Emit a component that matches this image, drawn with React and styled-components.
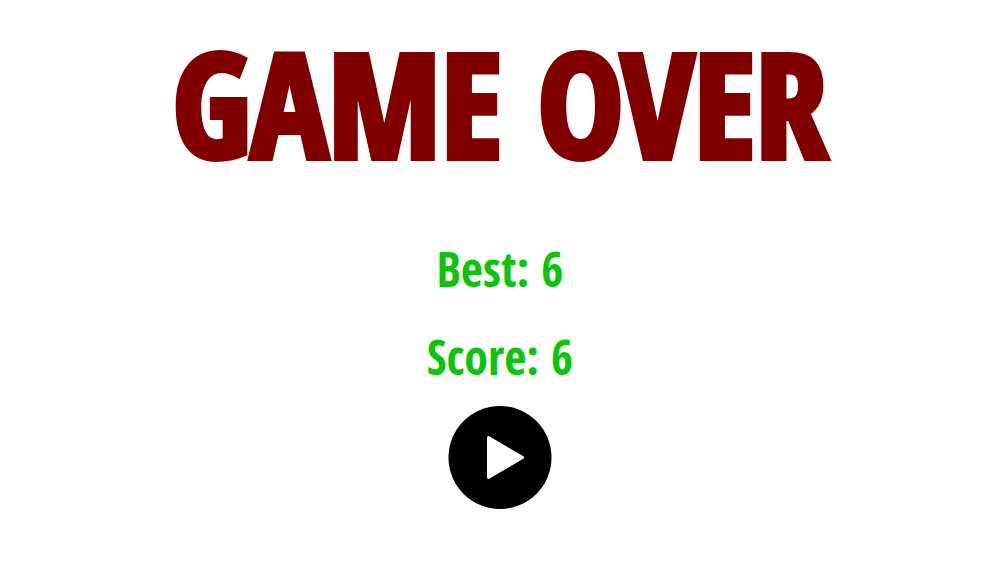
import React from "react";
import styled, { createGlobalStyle } from "styled-components";

const GlobalStyle = createGlobalStyle`
  body {
    margin: 0;
    background-color: #ffffff;
  }
`;

const Screen = styled.main`
  display: flex;
  flex-direction: column;
  align-items: center;
  padding-top: 28px;
`;

const Title = styled.h1`
  margin: 0;
  color: #800000;
  font-family: Impact, "Open Sans Condensed", "Roboto Condensed", sans-serif;
  font-size: 144px;
  font-weight: 900;
  line-height: 148px;
  white-space: nowrap;
  -webkit-text-stroke: 6px #800000;
`;

const Scores = styled.section`
  display: flex;
  flex-direction: column;
  align-items: center;
  gap: 40px;
  margin: 69px 0 25px;
`;

const ScoreLine = styled.p`
  margin: 0;
  color: #0cc40c;
  font-family: "DIN Condensed", "Open Sans Condensed", "Roboto Condensed", sans-serif;
  font-size: 48px;
  font-weight: 700;
  line-height: 48px;
`;

const PlayButton = styled.button`
  display: flex;
  padding: 0;
  border: none;
  border-radius: 50%;
  background: none;
  cursor: pointer;
`;

function App() {
  return (
    <Screen>
      <GlobalStyle />
      <Title>GAME OVER</Title>
      <Scores>
        <ScoreLine>Best: 6</ScoreLine>
        <ScoreLine>Score: 6</ScoreLine>
      </Scores>
      <PlayButton type="button" aria-label="Play again">
        <svg width="104" height="104" viewBox="0 0 104 104">
          <circle cx="52" cy="51.5" r="51.5" fill="#000000" />
          <path
            d="M40.5 31.5 L74.5 51.5 L40.5 71.5 Z"
            fill="#ffffff"
            stroke="#ffffff"
            strokeWidth="3"
            strokeLinejoin="round"
          />
        </svg>
      </PlayButton>
    </Screen>
  );
}

export default App;
